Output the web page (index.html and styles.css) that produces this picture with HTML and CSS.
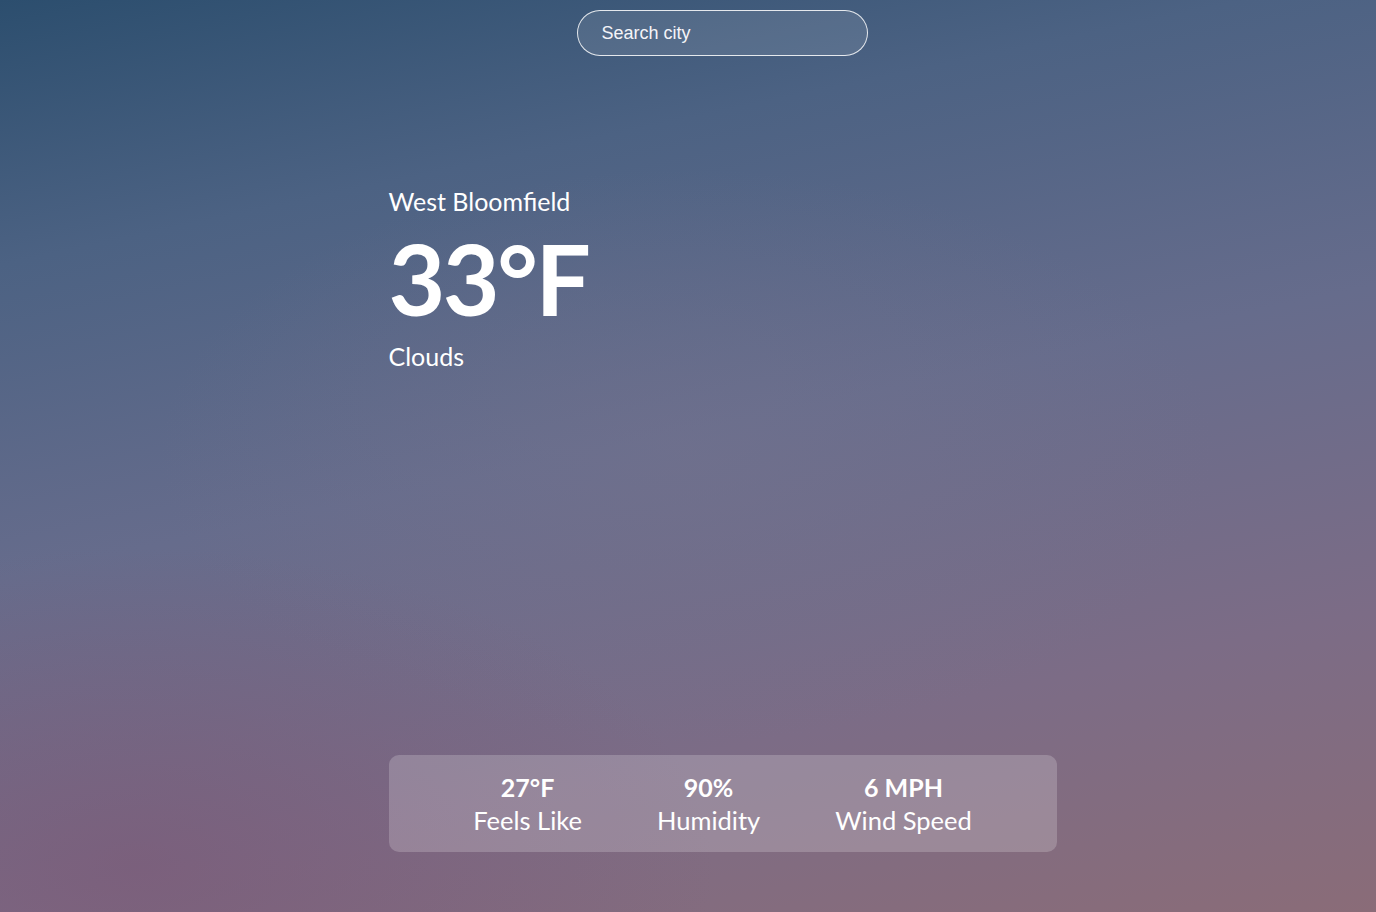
FILE: index.html
```html
<!DOCTYPE html>
<html lang="en">
<head>
<meta charset="utf-8">
<title>Weather</title>
<link rel="stylesheet" href="styles.css">
</head>
<body>
<div class="app">
  <div class="search-wrap">
    <input class="search" type="text" placeholder="Search city">
  </div>
  <main class="container">
    <section class="top">
      <p class="location">West Bloomfield</p>
      <h1 class="temp">33°F</h1>
      <p class="desc">Clouds</p>
    </section>
    <section class="bottom">
      <div class="stat">
        <p class="value">27°F</p>
        <p class="label">Feels Like</p>
      </div>
      <div class="stat">
        <p class="value">90%</p>
        <p class="label">Humidity</p>
      </div>
      <div class="stat">
        <p class="value">6 MPH</p>
        <p class="label">Wind Speed</p>
      </div>
    </section>
  </main>
</div>
</body>
</html>
```
FILE: styles.css
```css
* { box-sizing: border-box; }
html, body { margin: 0; padding: 0; height: 100%; }
body {
  font-family: "Lato", "Noto Sans", sans-serif;
  color: #fff;
  background:
    radial-gradient(ellipse 60% 50% at 10% 95%, rgba(122, 86, 116, 0.55), rgba(122, 86, 116, 0) 70%),
    radial-gradient(ellipse 55% 45% at 50% 50%, rgba(118, 116, 142, 0.45), rgba(118, 116, 142, 0) 70%),
    linear-gradient(168deg, #2c4e6e 0%, #4c6283 22%, #666c8c 48%, #7c6c86 75%, #8a6c78 100%);
  overflow: hidden;
}
.app {
  height: 912px;
  display: flex;
  flex-direction: column;
  align-items: center;
}
.search-wrap {
  padding-top: 10px;
  padding-left: 68px;
}
.search {
  width: 291px;
  height: 46px;
  border-radius: 23px;
  border: 1px solid rgba(255, 255, 255, 0.85);
  background: rgba(255, 255, 255, 0.1);
  color: #fff;
  padding: 0 24px;
  font-family: "Liberation Sans", Arial, sans-serif;
  font-size: 18px;
  outline: none;
}
.search::placeholder { color: #f4f4f8; }
.container {
  width: 668px;
  margin-left: 69px;
  flex: 1;
  display: flex;
  flex-direction: column;
}
.top p, .top h1, .stat p { margin: 0; }
.location {
  margin-top: 130px !important;
  font-size: 25px;
  line-height: 30px;
}
.temp {
  margin-top: 13px !important;
  font-size: 98px;
  font-weight: 700;
  line-height: 98px;
  letter-spacing: -2.5px;
}
.desc {
  margin-top: 14px !important;
  font-size: 25px;
  line-height: 30px;
}
.bottom {
  margin-top: auto;
  margin-bottom: 60px;
  height: 97px;
  background: rgba(255, 255, 255, 0.2);
  border-radius: 10px;
  display: flex;
  justify-content: center;
  gap: 75px;
  padding: 17px 0 16px;
}
.stat {
  text-align: center;
}
.value {
  font-size: 25px;
  font-weight: 700;
  line-height: 31px;
}
.label {
  margin-top: 2px !important;
  font-size: 25.5px;
  line-height: 31px;
}
```
